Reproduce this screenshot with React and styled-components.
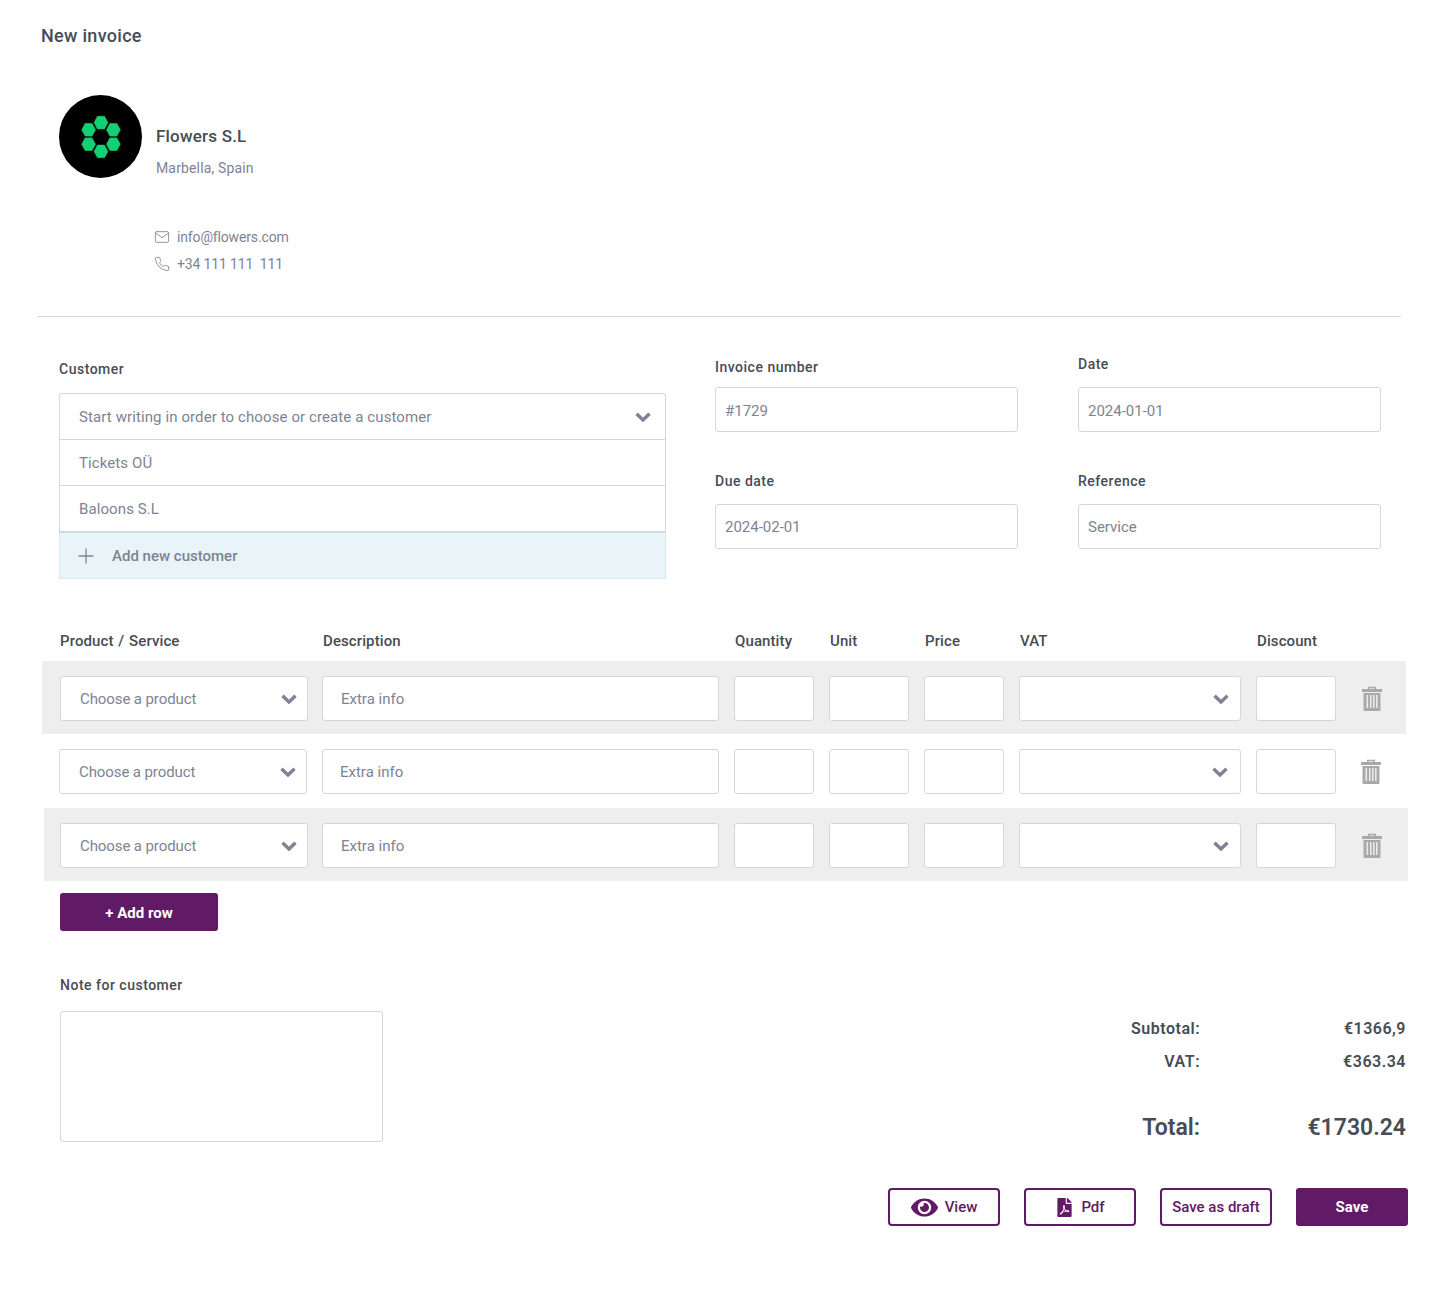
import React from 'react';
import styled, { createGlobalStyle } from 'styled-components';
import { FaEye, FaFilePdf } from 'react-icons/fa';
import { FiMail, FiPhone, FiPlus } from 'react-icons/fi';

const GlobalStyle = createGlobalStyle`
  html, body { margin: 0; padding: 0; background: #fff; }
  body { font-family: Roboto, "Liberation Sans", sans-serif; color: #474c55; }
  * { box-sizing: border-box; }
`;

const Page = styled.div`
  width: 1438px;
  height: 1290px;
  padding-top: 24px;
  overflow: hidden;
`;

const Title = styled.h1`
  margin: 0 0 0 41px;
  font-size: 18px;
  line-height: 24px;
  font-weight: 500;
  letter-spacing: 0.3px;
  color: #474c55;
`;

const Company = styled.section`
  margin: 47px 0 0 59px;
  display: flex;
  align-items: center;
  gap: 14px;
`;

const Avatar = styled.div`
  width: 83px;
  height: 83px;
  border-radius: 50%;
  background: #000;
  display: flex;
  align-items: center;
  justify-content: center;
`;

const CompanyText = styled.div`
  padding-top: 30px;
`;

const CompanyName = styled.div`
  font-size: 17px;
  line-height: 22px;
  font-weight: 500;
  letter-spacing: 0.2px;
  color: #474c55;
`;

const CompanyPlace = styled.div`
  margin-top: 11px;
  font-size: 14px;
  line-height: 20px;
  letter-spacing: 0.15px;
  color: #7d8394;
`;

const Contacts = styled.div`
  margin: 49px 0 0 154px;
  display: flex;
  flex-direction: column;
  gap: 7px;
`;

const Contact = styled.div`
  display: flex;
  align-items: center;
  gap: 7px;
  font-size: 14px;
  line-height: 20px;
  letter-spacing: -0.15px;
  color: #7d8394;
  svg { width: 16px; height: 16px; stroke-width: 1.3; }
`;

const Divider = styled.hr`
  margin: 42px 0 0 38px;
  width: 1363px;
  height: 1px;
  border: 0;
  background: #d4d6da;
`;

const FormArea = styled.section`
  margin: 37px 0 0 59px;
  display: flex;
  gap: 49px;
`;

const Label = styled.div`
  font-size: 14px;
  line-height: 20px;
  font-weight: 500;
  letter-spacing: 0.5px;
  color: #474c55;
`;

const CustomerCol = styled.div`
  width: 607px;
  padding-top: 5px;
`;

const CustomerList = styled.div`
  margin-top: 14px;
  border: 1px solid #d3d6de;
  border-bottom: 0;
  border-radius: 3px 3px 0 0;
`;

const CustomerOption = styled.div`
  height: 46px;
  padding: 0 14px 0 19px;
  display: flex;
  align-items: center;
  justify-content: space-between;
  font-size: 15px;
  letter-spacing: 0.1px;
  color: #7d8394;
  border-bottom: 1px solid #d3d6de;
`;

const AddCustomer = styled.div`
  height: 47px;
  margin: 0 -1px;
  padding: 0 19px 0 14px;
  display: flex;
  align-items: center;
  gap: 14px;
  font-size: 15px;
  font-weight: 500;
  color: #7d8394;
  background: #e9f4f9;
  border: 1px solid #d6e8f2;
  border-top-color: #c9dce7;
  border-radius: 0 0 3px 3px;
  svg { width: 24px; height: 24px; stroke-width: 1.3; }
`;

const FieldsGrid = styled.div`
  display: grid;
  grid-template-columns: 303px 303px;
  align-content: start;
  column-gap: 60px;
  row-gap: 39px;
`;

const Field = styled.div`
  display: flex;
  flex-direction: column;
`;

const FieldLabel = styled(Label)`
  margin-top: ${p => p.$top || 0}px;
  margin-bottom: ${p => p.$gap || 10}px;
`;

const Box = styled.div`
  height: 45px;
  padding: ${p => (p.$low ? 2 : 0)}px ${p => p.$pad || 9}px 0;
  display: flex;
  align-items: center;
  font-size: 15px;
  color: #7d8394;
  background: #fff;
  border: 1px solid #d3d6de;
  border-radius: 3px;
`;

const ProductBox = styled(Box)`
  margin: 0 ${p => (p.$nudge ? '-1px' : '0')} 0 ${p => (p.$nudge ? '1px' : '0')};
  padding: 0 10px 0 19px;
  justify-content: space-between;
  letter-spacing: -0.1px;
`;

const VatBox = styled(Box)`
  padding: 0 ${p => (p.$nudge ? 11 : 12)}px 0 0;
  justify-content: flex-end;
`;

const columns = '248px 397px 80px 80px 80px 222px 80px';

const TableHead = styled.div`
  margin: 52px 0 10px 60px;
  display: grid;
  grid-template-columns: ${columns};
  column-gap: 15px;
  height: 20px;
`;

const HeadCell = styled(Label)`
  font-size: 15px;
  letter-spacing: 0.1px;
  word-spacing: 1px;
`;

const Row = styled.div`
  margin: ${p => p.$top}px 0 0 ${p => p.$left}px;
  width: 1364px;
  height: 73px;
  padding: 15px 0 0 ${p => 59 - p.$left}px;
  display: flex;
  align-items: flex-start;
  background: ${p => (p.$shaded ? '#eeeeee' : '#fff')};
`;

const Cells = styled.div`
  display: grid;
  grid-template-columns: ${columns};
  column-gap: 15px;
`;

const TrashWrap = styled.span`
  margin: 10px 0 0 ${p => (p.$nudge ? 26 : 25)}px;
  display: flex;
  color: #a9a9a9;
`;

const PrimaryButton = styled.button`
  width: ${p => p.$w}px;
  height: 38px;
  border: 0;
  border-radius: 3px;
  background: #611a66;
  color: #fff;
  font-family: inherit;
  font-size: 15px;
  font-weight: 700;
`;

const AddRow = styled(PrimaryButton)`
  display: block;
  margin: 12px 0 0 60px;
  padding-top: 3px;
`;

const Bottom = styled.section`
  margin: 44px 32px 0 60px;
  height: 167px;
  display: flex;
  justify-content: space-between;
`;

const NoteBox = styled.div`
  margin-top: 16px;
  width: 323px;
  height: 131px;
  border: 1px solid #d3d6de;
  border-radius: 3px;
`;

const Totals = styled.div`
  width: 300px;
  padding-top: 42px;
`;

const TotalRow = styled.div`
  display: grid;
  grid-template-columns: 1fr 206px;
  text-align: right;
  height: ${p => (p.$big ? 32 : 33)}px;
  margin-top: ${p => (p.$big ? 29 : 0)}px;
  font-size: ${p => (p.$big ? 23 : 16)}px;
  font-weight: 600;
  letter-spacing: ${p => (p.$big ? 0 : 0.5)}px;
  line-height: ${p => (p.$big ? 32 : 24)}px;
  color: #474c55;
`;

const Actions = styled.div`
  margin: 46px 30px 0 0;
  display: flex;
  justify-content: flex-end;
  gap: 24px;
`;

const OutlineButton = styled.button`
  width: 112px;
  height: 38px;
  display: flex;
  align-items: center;
  justify-content: center;
  gap: 7px;
  border: 2px solid #611a66;
  border-radius: 4px;
  background: #fff;
  color: #611a66;
  font-family: inherit;
  font-size: 15px;
  font-weight: 500;
  white-space: nowrap;
  padding: 0;
`;

const hexCenters = [[0, -14.4], [12.4, -7.2], [12.4, 7.2], [0, 14.4], [-12.4, 7.2], [-12.4, -7.2]];

const Flower = () => (
  <svg width="44" height="46" viewBox="-22 -23 44 46" fill="#14cf73" stroke="#14cf73" strokeWidth="0.6" strokeLinejoin="round">
    {hexCenters.map(([x, y]) => (
      <polygon key={`${x}${y}`} transform={`translate(${x} ${y})`} points="-6.900,0 -3.500,-6.300 3.500,-6.300 6.900,0 3.500,6.300 -3.500,6.300" />
    ))}
  </svg>
);

const Chevron = () => (
  <svg width="16" height="10" viewBox="0 0 16 10" fill="none" stroke="#7d8394" strokeWidth="3.4" style={{ flex: 'none' }}>
    <polyline points="1.500,1.800 8,8 14.500,1.800" />
  </svg>
);

const Trash = () => (
  <svg width="20" height="25" viewBox="0 0 20 25" fill="currentColor">
    <path d="M6 3V0.800h8V3h-1.600V2.200H7.600V3z" />
    <rect x="0" y="3" width="20" height="3" />
    <path d="M1.500 7h17v17a1 1 0 0 1-1 1h-15a1 1 0 0 1-1-1z" />
    <g fill="#fff" opacity="0.75">
      <rect x="4.500" y="9" width="1.600" height="13" />
      <rect x="8" y="9" width="1.600" height="13" />
      <rect x="11" y="9" width="1.600" height="13" />
      <rect x="14" y="9" width="1.600" height="13" />
    </g>
  </svg>
);

const rows = [
  { left: 42, top: 0, shaded: true, nudge: true },
  { left: 42, top: 0, shaded: false, nudge: false },
  { left: 44, top: 1, shaded: true, nudge: true },
];

const App = () => (
  <Page>
    <GlobalStyle />
    <Title>New invoice</Title>

    <Company>
      <Avatar><Flower /></Avatar>
      <CompanyText>
        <CompanyName>Flowers S.L</CompanyName>
        <CompanyPlace>Marbella, Spain</CompanyPlace>
      </CompanyText>
    </Company>

    <Contacts>
      <Contact><FiMail />info@flowers.com</Contact>
      <Contact><FiPhone />+34 111 111&nbsp; 111</Contact>
    </Contacts>

    <Divider />

    <FormArea>
      <CustomerCol>
        <Label>Customer</Label>
        <CustomerList>
          <CustomerOption>Start writing in order to choose or create a customer<Chevron /></CustomerOption>
          <CustomerOption>Tickets OÜ</CustomerOption>
          <CustomerOption>Baloons S.L</CustomerOption>
          <AddCustomer><FiPlus />Add new customer</AddCustomer>
        </CustomerList>
      </CustomerCol>
      <FieldsGrid>
        <Field><FieldLabel $top={3}>Invoice number</FieldLabel><Box $low>#1729</Box></Field>
        <Field><FieldLabel $gap={13}>Date</FieldLabel><Box $low>2024-01-01</Box></Field>
        <Field><FieldLabel $gap={13}>Due date</FieldLabel><Box>2024-02-01</Box></Field>
        <Field><FieldLabel $gap={13}>Reference</FieldLabel><Box>Service</Box></Field>
      </FieldsGrid>
    </FormArea>

    <TableHead>
      <HeadCell>Product / Service</HeadCell>
      <HeadCell>Description</HeadCell>
      <HeadCell>Quantity</HeadCell>
      <HeadCell>Unit</HeadCell>
      <HeadCell>Price</HeadCell>
      <HeadCell>VAT</HeadCell>
      <HeadCell>Discount</HeadCell>
    </TableHead>

    {rows.map((row, i) => (
      <Row key={i} $left={row.left} $top={row.top} $shaded={row.shaded}>
        <Cells>
          <ProductBox $nudge={row.nudge}>Choose a product<Chevron /></ProductBox>
          <Box $pad={row.nudge ? 18 : 17}>Extra info</Box>
          <Box />
          <Box />
          <Box />
          <VatBox $nudge={row.nudge}><Chevron /></VatBox>
          <Box />
        </Cells>
        <TrashWrap $nudge={row.nudge}><Trash /></TrashWrap>
      </Row>
    ))}

    <AddRow $w={158}>+ Add row</AddRow>

    <Bottom>
      <div>
        <Label>Note for customer</Label>
        <NoteBox />
      </div>
      <Totals>
        <TotalRow><span>Subtotal:</span><span>€1366,9</span></TotalRow>
        <TotalRow><span>VAT:</span><span>€363.34</span></TotalRow>
        <TotalRow $big><span>Total:</span><span>€1730.24</span></TotalRow>
      </Totals>
    </Bottom>

    <Actions>
      <OutlineButton><FaEye size={27} />View</OutlineButton>
      <OutlineButton><FaFilePdf size={19} />Pdf</OutlineButton>
      <OutlineButton>Save as draft</OutlineButton>
      <PrimaryButton $w={112}>Save</PrimaryButton>
    </Actions>
  </Page>
);

export default App;
